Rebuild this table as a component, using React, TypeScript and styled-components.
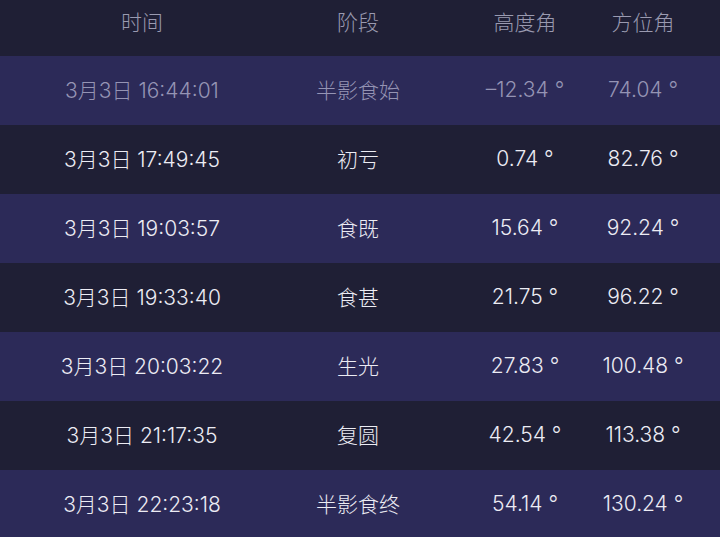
import React from "react";
import styled, { createGlobalStyle } from "styled-components";

type Row = {
  time: string;
  stage: string;
  alt: string;
  az: string;
  dim?: boolean;
};

const rows: Row[] = [
  { time: "3月3日 16:44:01", stage: "半影食始", alt: "–12.34 °", az: "74.04 °", dim: true },
  { time: "3月3日 17:49:45", stage: "初亏", alt: "0.74 °", az: "82.76 °" },
  { time: "3月3日 19:03:57", stage: "食既", alt: "15.64 °", az: "92.24 °" },
  { time: "3月3日 19:33:40", stage: "食甚", alt: "21.75 °", az: "96.22 °" },
  { time: "3月3日 20:03:22", stage: "生光", alt: "27.83 °", az: "100.48 °" },
  { time: "3月3日 21:17:35", stage: "复圆", alt: "42.54 °", az: "113.38 °" },
  { time: "3月3日 22:23:18", stage: "半影食终", alt: "54.14 °", az: "130.24 °" },
];

const EclipseTable = () => {
  return (
    <Table>
      <Header>
        <Cell>时间</Cell>
        <Cell>阶段</Cell>
        <Cell>高度角</Cell>
        <Cell>方位角</Cell>
      </Header>
      {rows.map((r, i) => (
        <DataRow key={r.time} $odd={i % 2 === 0} $dim={r.dim}>
          <Cell>{r.time}</Cell>
          <Cell>{r.stage}</Cell>
          <Cell>{r.alt}</Cell>
          <Cell>{r.az}</Cell>
        </DataRow>
      ))}
    </Table>
  );
};

const GlobalStyle = createGlobalStyle`
  body {
    margin: 0;
    background-color: #1f1f35;
    font-family: "Inter", "Noto Sans CJK SC", sans-serif;
  }
`;

const Table = styled.div`
  display: flex;
  flex-direction: column;
  width: 720px;
  overflow: hidden;
`;

const Grid = styled.div`
  display: grid;
  grid-template-columns: 284px 148px 186px 50px;
  align-items: center;
  box-sizing: border-box;
  font-size: 21px;
  font-weight: 300;
  white-space: nowrap;
`;

const Header = styled(Grid)`
  height: 56px;
  padding-bottom: 14px;
  background-color: #1f1f35;
  color: #9a9ab0;
`;

const DataRow = styled(Grid)<{ $odd: boolean; $dim?: boolean }>`
  height: 69px;
  padding-bottom: 3px;
  background-color: ${(p) => (p.$odd ? "#2c2a58" : "#1f1f35")};
  color: ${(p) => (p.$dim ? "#9594b4" : "#ececf4")};
`;

const Cell = styled.div`
  display: flex;
  justify-content: center;
`;

export default function App() {
  return (
    <>
      <GlobalStyle />
      <EclipseTable />
    </>
  );
}
